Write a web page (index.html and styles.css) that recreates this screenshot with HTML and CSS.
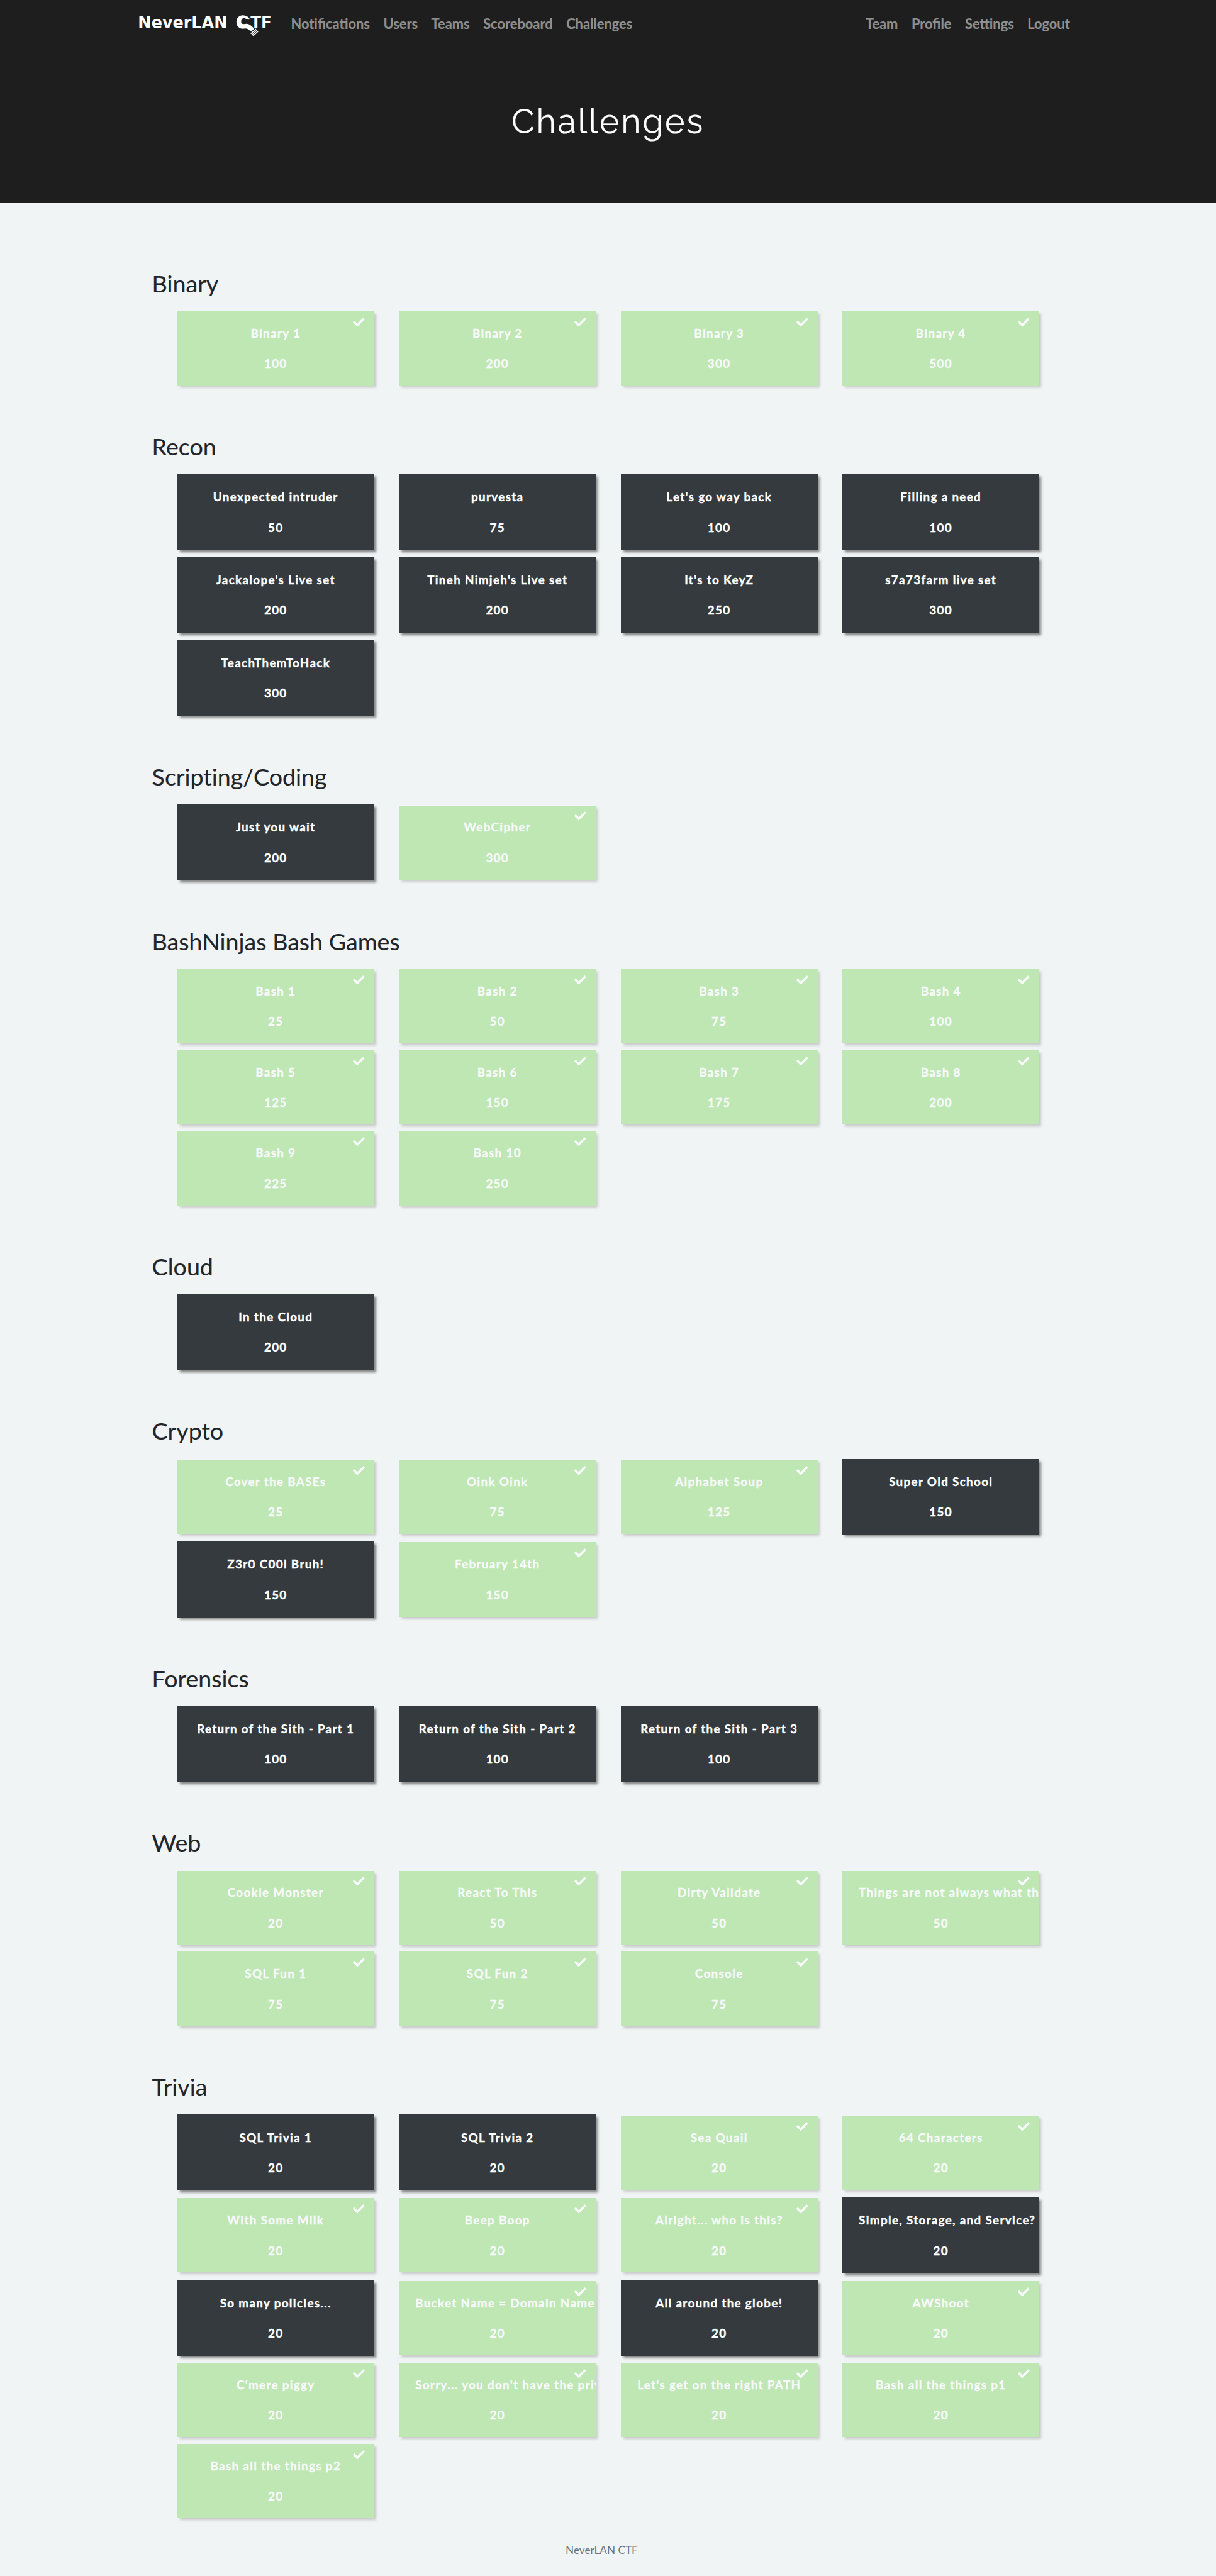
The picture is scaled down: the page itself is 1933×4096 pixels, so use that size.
FILE: index.html
```html
<!DOCTYPE html>
<html lang="en">
<head>
<meta charset="utf-8">
<title>NeverLAN CTF</title>
<link rel="stylesheet" href="styles.css">
</head>
<body>
<header class="hero">
  <nav class="navbar">
    <a class="brand" aria-label="NeverLAN CTF">
      <svg class="logo" viewBox="0 0 316 72">
        <text class="logo-text" x="0.5" y="41.3" textLength="212" lengthAdjust="spacingAndGlyphs">NeverLAN</text>
        <text class="logo-text" x="267" y="41.3" textLength="50" lengthAdjust="spacingAndGlyphs">TF</text>
        <g transform="translate(-6 0) scale(.33333)">
          <path class="logo-hook" d="M815 62C812 50 790 32 765 32C738 32 719 52 719 80C719 108 738 128 765 128C790 122 805 128 823 149L845 128C830 110 812 94 792 93C775 95 765 97 758 92C748 82 752 54 772 53C785 53 795 68 815 62Z"/>
          <path class="logo-stripes" d="M858 130L821 164M866 138L829 172M873 146L835 181"/>
        </g>
      </svg>
    </a>
    <div class="links">
      <a>Not&zwnj;ifications</a><a>Users</a><a>Teams</a><a>Scoreboard</a><a>Challenges</a>
    </div>
    <div class="links links-right">
      <a>Team</a><a>Profile</a><a>Sett&zwnj;ings</a><a>Logout</a>
    </div>
  </nav>
  <h1 class="title">Challenges</h1>
</header>
<main class="board" id="board"></main>
<footer class="footer">NeverLAN CTF</footer>
<script src="board.js"></script>
</body>
</html>
```
FILE: board.js
```js
// A trailing "*" on a challenge name marks it as solved.
const categories = [
  ["Binary", [["Binary 1*", 100], ["Binary 2*", 200], ["Binary 3*", 300], ["Binary 4*", 500]]],
  ["Recon", [["Unexpected intruder", 50], ["purvesta", 75], ["Let's go way back", 100], ["Filling a need", 100],
    ["Jackalope's Live set", 200], ["Tineh Nimjeh's Live set", 200], ["It's to KeyZ", 250], ["s7a73farm live set", 300],
    ["TeachThemToHack", 300]]],
  ["Scripting/Coding", [["Just you wait", 200], ["WebCipher*", 300]]],
  ["BashNinjas Bash Games", [["Bash 1*", 25], ["Bash 2*", 50], ["Bash 3*", 75], ["Bash 4*", 100], ["Bash 5*", 125],
    ["Bash 6*", 150], ["Bash 7*", 175], ["Bash 8*", 200], ["Bash 9*", 225], ["Bash 10*", 250]]],
  ["Cloud", [["In the Cloud", 200]]],
  ["Crypto", [["Cover the BASEs*", 25], ["Oink Oink*", 75], ["Alphabet Soup*", 125], ["Super Old School", 150],
    ["Z3r0 C00l Bruh!", 150], ["February 14th*", 150]]],
  ["Forensics", [["Return of the Sith - Part 1", 100], ["Return of the Sith - Part 2", 100], ["Return of the Sith - Part 3", 100]]],
  ["Web", [["Cookie Monster*", 20], ["React To This*", 50], ["Dirty Validate*", 50], ["Things are not always what they seem*", 50],
    ["SQL Fun 1*", 75], ["SQL Fun 2*", 75], ["Console*", 75]]],
  ["Trivia", [["SQL Trivia 1", 20], ["SQL Trivia 2", 20], ["Sea Quail*", 20], ["64 Characters*", 20],
    ["With Some Milk*", 20], ["Beep Boop*", 20], ["Alright... who is this?*", 20], ["Simple, Storage, and Service?", 20],
    ["So many policies...", 20], ["Bucket Name = Domain Name*", 20], ["All around the globe!", 20], ["AWShoot*", 20],
    ["C'mere piggy*", 20], ["Sorry... you don't have the privileges*", 20], ["Let's get on the right PATH*", 20], ["Bash all the things p1*", 20],
    ["Bash all the things p2*", 20]]],
];
const check = '<svg class="check" viewBox="0 0 512 512"><path d="M173.9 439.4l-166.4-166.4c-10-10-10-26.2 0-36.200l36.200-36.200c10-10 26.200-10 36.200 0L192 312.700 432.100 72.600c10-10 26.200-10 36.200 0l36.200 36.200c10 10 10 26.200 0 36.200l-294.400 294.400c-10 10-26.200 10-36.200 0z"/></svg>';
document.getElementById("board").innerHTML = categories.map(([name, items]) =>
  `<section class="category"><h3 class="category-name">${name}</h3><div class="cards">` +
  items.map(([label, points]) => {
    const solved = label.endsWith("*");
    return `<button class="card${solved ? " solved" : ""}">${solved ? check : ""}<p>${label.replace("*", "")}</p><span>${points}</span></button>`;
  }).join("") + "</div></section>").join("");
```
FILE: styles.css
```css
/* 1rem is 16 design pixels on a 1440-wide layout */
html { font-size: 21.478px; }
* { box-sizing: border-box; }
body { margin: 0; background: #f0f4f5; color: #212529; font-family: Lato, sans-serif; height: 4096px; overflow: hidden; }

.hero { background: #1e1e1e; height: 15rem; display: flex; flex-direction: column; align-items: center; }
.navbar { width: 71.25rem; height: 3.5rem; padding: 0 1.4375rem 0 .8125rem; display: flex; align-items: center; }
.brand { width: 9.875rem; height: 3.5rem; padding-top: .78rem; margin-right: 1.47rem; }
.logo { display: block; width: 9.875rem; height: 2.25rem; overflow: visible; }
.logo-text { font: bold 38.4px "DejaVu Sans", sans-serif; fill: #fff; }
.logo-hook { fill: #fff; }
.logo-stripes { fill: none; stroke: #fff; stroke-width: 7; }
.links { display: flex; gap: 1rem; padding-top: .05rem; font-size: 1.017rem; font-weight: 700; color: #8f8f8f; line-height: 1.5; -webkit-text-stroke: .2px; }
.links-right { margin-left: auto; }
.title { margin: 4.04rem 0 0; font: 400 2.5rem/1.2 Raleway, Lato, sans-serif; letter-spacing: .125rem; color: #fff; -webkit-text-stroke: .2px; }

.board { width: 71.25rem; margin: 0 auto; padding: 4.9375rem 1.875rem 0; }
.category { margin-bottom: 3.4375rem; }
.category:last-child { margin-bottom: 0; }
.category-name { margin: 0; height: 3.125rem; font-size: 1.75rem; font-weight: 400; line-height: 1.22; font-variant-ligatures: none; -webkit-text-stroke: .2px; }
.cards { margin: 0 .9375rem 0 1.875rem; display: grid; grid-template-columns: repeat(4, 14.5625rem); column-gap: 1.85rem; row-gap: .5rem; align-items: center; }
.card { position: relative; display: flex; flex-direction: column; align-items: center; height: 5.625rem; padding: 1.03rem 1.2rem 0; border: 0; overflow: hidden; background: #343a3e; color: #fff; font: 700 .875rem/1.5 Lato, sans-serif; letter-spacing: .0625rem; white-space: nowrap; box-shadow: .1875rem .1875rem .1875rem #808080; -webkit-text-stroke: .4px; }
.card p { margin: 0 0 .94rem; max-width: 100%; }
.card.solved { height: 5.5rem; padding-top: .9675rem; background: #bee7b4; color: #f8f9fa; box-shadow: .1875rem .1875rem .1875rem #c7c8c8; }
.check { position: absolute; right: .7rem; top: .36rem; width: .87rem; height: .87rem; fill: #f8f9fa; }
.footer { margin-top: 1.78rem; padding-right: .9375rem; text-align: center; font-size: .8rem; line-height: 1.5; color: #6c757d; }
```
